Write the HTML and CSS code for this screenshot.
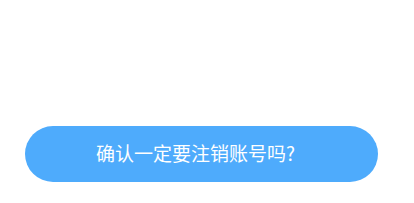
FILE: index.html
```html
<!DOCTYPE html>
<html lang="zh-CN">
<head>
    <meta charset="UTF-8">
    <meta name="viewport" content="width=device-width, initial-scale=1.0">
    <title>注销账号</title>
    <link rel="stylesheet" href="styles.css">
</head>
<body>
    <div class="page">
        <button class="confirm-btn">确认一定要注销账号吗?</button>
    </div>
</body>
</html>
```

FILE: styles.css
```css
body {
    margin: 0;
    background-color: #fff;
    font-family: "Noto Sans CJK SC", "Noto Sans", sans-serif;
}

.page {
    height: 203px;
    padding: 126px 36px 0 25px;
    box-sizing: border-box;
}

.confirm-btn {
    display: block;
    width: 100%;
    height: 56px;
    padding: 0 12px 4px 0;
    border: none;
    border-radius: 28px;
    background-color: #4eabfc;
    color: #fff;
    font-family: inherit;
    font-size: 19px;
    text-align: center;
}
```
